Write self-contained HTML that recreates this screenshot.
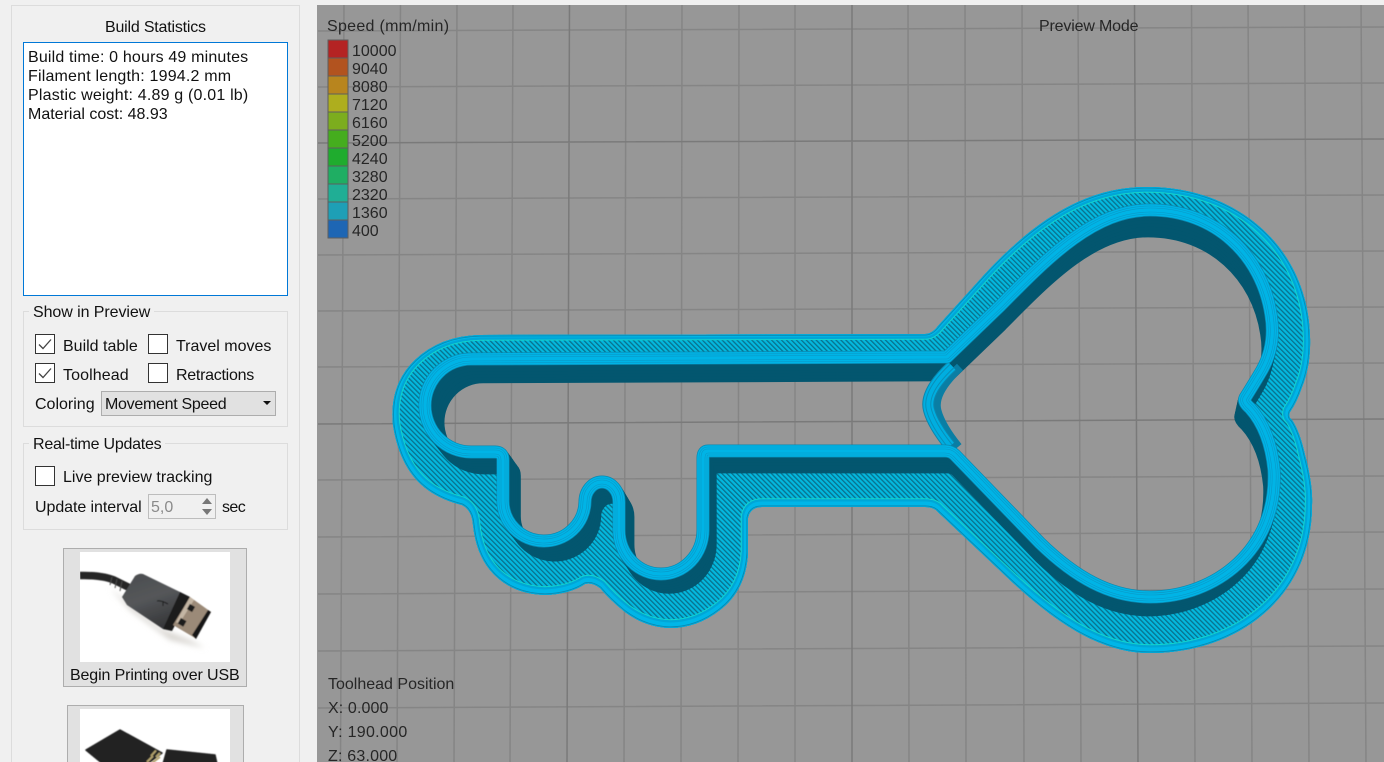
<!DOCTYPE html>
<html><head><meta charset="utf-8"><style>
html,body{margin:0;padding:0;background:#f0f0f0;}
#p{position:relative;width:1384px;height:762px;overflow:hidden;background:#f0f0f0;font:16px/20px "Liberation Sans",sans-serif;color:#111;}
.t{position:absolute;white-space:nowrap;}
.b{position:absolute;box-sizing:border-box;}
.g{position:absolute;box-sizing:border-box;border:1px solid #dcdcdc;}
.c{position:absolute;box-sizing:border-box;width:20px;height:20px;background:#fff;border:1px solid #333;}
.v{color:#262626;}
</style></head><body><div id="p">
<div class="b" style="left:11px;top:5px;width:289px;height:770px;border:1px solid #dcdcdc"></div>
<div class="t" style="left:105px;top:18px;letter-spacing:-.2px">Build Statistics</div>
<div class="b" style="left:23px;top:42px;width:265px;height:254px;background:#fff;border:1px solid #0078d7"></div>
<div class="t" style="left:28px;top:48px;line-height:19px"><span style="letter-spacing:.17px">Build time: 0 hours 49 minutes</span><br><span style="letter-spacing:.19px">Filament length: 1994.2 mm</span><br><span style="letter-spacing:.19px">Plastic weight: 4.89 g (0.01 lb)</span><br>Material cost: 48.93</div>

<div class="g" style="left:23px;top:311px;width:265px;height:116px"></div>
<div class="t" style="left:29px;top:303px;background:#f0f0f0;padding:0 4px;letter-spacing:-.07px">Show in Preview</div>
<div class="c" style="left:35px;top:334px"></div>
<div class="c" style="left:35px;top:363px"></div>
<div class="c" style="left:148px;top:334px"></div>
<div class="c" style="left:148px;top:363px"></div>
<svg class="b" style="left:35px;top:334px" width="20" height="50"><path d="M4 10.5L8 14.5L16 5.5M4 39.5L8 43.5L16 34.5" fill="none" stroke="#444" stroke-width="1.3"/></svg>
<div class="t" style="left:63px;top:337px">Build table</div>
<div class="t" style="left:176px;top:337px">Travel moves</div>
<div class="t" style="left:63px;top:366px;letter-spacing:.1px">Toolhead</div>
<div class="t" style="left:176px;top:366px;letter-spacing:-.27px">Retractions</div>
<div class="t" style="left:35px;top:395px">Coloring</div>
<div class="b" style="left:101px;top:391px;width:175px;height:25px;background:#e1e1e1;border:1px solid #adadad"></div>
<div class="t" style="left:105px;top:395px;letter-spacing:-.29px">Movement Speed</div>
<svg class="b" style="left:262px;top:400px" width="10" height="6"><path d="M1 1H9L5 5Z" fill="#111"/></svg>

<div class="g" style="left:23px;top:443px;width:265px;height:87px"></div>
<div class="t" style="left:29px;top:435px;background:#f0f0f0;padding:0 4px;letter-spacing:-.24px">Real-time Updates</div>
<div class="c" style="left:35px;top:466px"></div>
<div class="t" style="left:63px;top:468px">Live preview tracking</div>
<div class="t" style="left:35px;top:498px;letter-spacing:-.07px">Update interval</div>
<div class="b" style="left:148px;top:494px;width:68px;height:25px;border:1px solid #bdbdbd"></div>
<div class="t" style="left:151px;top:498px;color:#8a8a8a">5,0</div>
<svg class="b" style="left:199px;top:495px" width="16" height="23"><rect x="0" y="0" width="16" height="23" fill="#f0f0f0"/><path d="M3 9L8 3L13 9ZM3 14L8 20L13 14Z" fill="#777"/></svg>
<div class="t" style="left:222px;top:498px;letter-spacing:-.6px">sec</div>

<div class="b" style="left:63px;top:548px;width:184px;height:139px;background:#e1e1e1;border:1px solid #adadad"></div>
<svg class="b" style="left:80px;top:552px" width="150" height="110" viewBox="80 552 150 110">
<defs><filter id="bl"><feGaussianBlur stdDeviation="3"/></filter><filter id="bs"><feGaussianBlur stdDeviation=".5"/></filter>
<linearGradient id="ub" x1="0" y1="0" x2=".4" y2="1"><stop offset="0" stop-color="#4a4c4e"/><stop offset=".5" stop-color="#55575a"/><stop offset="1" stop-color="#37383a"/></linearGradient></defs>
<rect x="80" y="552" width="150" height="110" fill="#fff"/>
<path d="M110 588L130 610L170 640L205 648L190 640L160 628L125 600Z" fill="#d8d5d0" filter="url(#bl)"/>
<g filter="url(#bs)">
<path d="M80 575.5Q102 575 114 580L130 588" fill="none" stroke="#262626" stroke-width="7.5"/>
<path d="M112 577L110 585M117 579L115 588M122 581L120 591" stroke="#4a4a4a" stroke-width="1" fill="none"/>
<path d="M122 597L135 576Q139 573 143 574L180 592L190 597L170 630L163 629L127 605Z" fill="url(#ub)"/>
<path d="M180 592L190 597L172 631L163 629Z" fill="#1f1f1f"/>
<path d="M190 597L211 612L195 638L173 625Z" fill="#9b8a78"/>
<path d="M208 610L211 612L196 639L192 635Z" fill="#141414"/>
<path d="M190 597L176 622L179 624L194 600Z" fill="#c4b6a4"/>
<rect x="188" y="605" width="6" height="6" fill="#1d1d1d" transform="rotate(30 191 608)"/>
<rect x="179" y="619" width="6.5" height="6.5" fill="#1d1d1d" transform="rotate(30 182 622)"/>
<path d="M157 601Q161 600 168 604M163 601V606" stroke="#1d1d1d" stroke-width="1.1" fill="none"/>
</g>
</svg>
<div class="t" style="left:70px;top:666px;letter-spacing:-.13px">Begin Printing over USB</div>

<div class="b" style="left:67px;top:705px;width:177px;height:80px;background:#e1e1e1;border:1px solid #adadad"></div>
<svg class="b" style="left:80px;top:709px" width="150" height="53" viewBox="80 709 150 53">
<rect x="80" y="709" width="150" height="60" fill="#fff"/>
<g filter="url(#bs)">
<path d="M86 750L120 730L162 753L147 764L103 764Z" fill="#242424" stroke="#242424" stroke-width="1.5" stroke-linejoin="round"/>
<path d="M160 753L156 757M156 750.5L151 756M160 757L152 763M153 756L147 762" stroke="#b3a26d" stroke-width="2" fill="none"/>
<path d="M167 750L215 755L217 764L163 764Z" fill="#242424" stroke="#242424" stroke-width="1.5" stroke-linejoin="round"/>
</g>
</svg>

<svg class="b" style="left:317px;top:5px" width="1067" height="757" viewBox="317 5 1067 757">
<defs>
<pattern id="h" width="3.5" height="3.5" patternUnits="userSpaceOnUse" patternTransform="rotate(-45)"><rect width="3.5" height="3.5" fill="#04b8de"/><rect width="1.3" height="3.5" fill="#08718d"/></pattern>
<path id="o" d="M480 335L925 334Q932 334 938 326L985 274C1040 215 1090 187 1147 187C1240 187 1308 250 1310 337Q1311 365 1302 387Q1297 402 1290 412Q1288 417 1292 420Q1300 432 1305 455Q1313 485 1312 505C1312 595 1240 653 1150 653C1100 653 1055 622 1010 580L938 512Q934 507 925 507L762 507Q750 507 748 518L748 553Q746 590 720 610Q697 628 670 628Q645 627 625 612Q610 600 600 588Q592 582 585 584Q570 594 545 595Q510 594 490 570Q476 553 473 525Q472 510 462 505Q442 500 428 490Q400 470 393 425Q389 385 415 360Q440 336 480 335Z"/>
<path id="r" d="M471 359L947 357L1000 306C1050 255 1095 210 1150 210C1215 210 1262 255 1271 315Q1276 345 1262 370Q1255 382 1245 398Q1243 402 1250 408Q1270 430 1274 470C1278 550 1215 597 1150 597C1110 597 1075 577 1040 543L955 455Q951 451 945 451L708 451Q703 451 703 458L703 530A42 44 0 0 1 619 530L619 502A17 20 0 0 0 585 502A41 40 0 0 1 503 500L503 460Q503 452 495 452L471 452A46 46.5 0 0 1 471 359Z"/>
<path id="q" d="M952 366Q924 392 929 410Q933 425 950 446"/>
<clipPath id="co"><use href="#o"/></clipPath>
<clipPath id="ch"><use href="#r" transform="translate(21.86 25.31) scale(.9793)"/></clipPath>
<g id="grid" stroke="#858585" stroke-width="1.5" fill="none">
<path d="M344 0L340.5 762M400.5 0L397 762M457 0L454 762M513 0L510 762M626 0L624 762M682 0L681 762M739 0L738 762M795 0L795 762M908 0L909 762M965 0L966 762M1022 0L1024 762M1078 0L1081 762M1191.5 0L1195 762M1248 0L1252 762M1304.5 0L1309 762M1361 0L1366 762"/>
<path d="M318 31L1384 27M318 87L1384 83M318 199L1384 195M318 255L1384 251M318 311L1384 307M318 367L1384 363M318 480L1384 476M318 537L1384 532M318 594L1384 589M318 651L1384 646M318 708L1384 703"/>
<path stroke="#7a7a7a" d="M569.5 0L567 762M852 0L852 762M1134.5 0L1138 762M318 143L1384 139M318 424L1384 419"/>
</g>
</defs>
<rect x="317" y="5" width="1067" height="757" fill="#979797"/>
<use href="#grid"/>
<!-- flange -->
<use href="#o" fill="url(#h)"/>
<g clip-path="url(#co)" fill="none" stroke-linejoin="round">
<g transform="translate(0 -1.5)">
<use href="#o" stroke="#14d4cc" stroke-width="14.5"/>
<use href="#o" stroke="#00a6d6" stroke-width="12.5"/>
<use href="#o" stroke="#00b6e8" stroke-width="8"/>
</g>
<use href="#o" stroke="#0a86ae" stroke-width="3"/>
<use href="#o" stroke="#00aee0" stroke-width="1.5"/>
</g>
<!-- hole -->
<g clip-path="url(#ch)"><rect x="317" y="5" width="1067" height="757" fill="#979797"/><use href="#grid"/></g>
<!-- swept wall -->
<g fill="none" stroke="#03566f" stroke-width="13" stroke-linejoin="round">
<use href="#r" transform="translate(21.86 25.31) scale(.9793)"/>
<use href="#r" transform="translate(18.22 21.09) scale(.98275)"/>
<use href="#r" transform="translate(14.57 16.87) scale(.9862)"/>
<use href="#r" transform="translate(10.93 12.66) scale(.98965)"/>
<use href="#r" transform="translate(7.29 8.44) scale(.9931)"/>
<use href="#r" transform="translate(3.64 4.22) scale(.99655)"/>
</g>
<!-- heart inner curve -->
<g fill="none">
<use href="#q" transform="translate(8 1)" stroke="#0a7ea4" stroke-width="9"/>
<use href="#q" stroke="#0a86ad" stroke-width="12"/>
<use href="#q" stroke="#00aee0" stroke-width="10"/>
<use href="#q" stroke="#0a8fb8" stroke-width="6"/>
<use href="#q" stroke="#00aee0" stroke-width="4"/>
</g>
<!-- ribbon -->
<g fill="none" stroke-linejoin="round">
<use href="#r" stroke="#0a88b0" stroke-width="13"/>
<use href="#r" stroke="#00b4e6" stroke-width="11.6"/>
<use href="#r" stroke="#0a98c6" stroke-width="8.6"/>
<use href="#r" stroke="#00b4e6" stroke-width="7.4"/>
<use href="#r" stroke="#0a98c6" stroke-width="4.6"/>
<use href="#r" stroke="#00b4e6" stroke-width="3.4"/>
</g>
<!-- legend -->
<g stroke="#5e5e5e" stroke-width="1">
<rect x="328" y="40" width="20" height="18" fill="#b42323"/>
<rect x="328" y="58" width="20" height="18" fill="#b2531f"/>
<rect x="328" y="76" width="20" height="18" fill="#b8851e"/>
<rect x="328" y="94" width="20" height="18" fill="#aeae1e"/>
<rect x="328" y="112" width="20" height="18" fill="#7cad1e"/>
<rect x="328" y="130" width="20" height="18" fill="#45ad1e"/>
<rect x="328" y="148" width="20" height="18" fill="#1fac2e"/>
<rect x="328" y="166" width="20" height="18" fill="#1fae63"/>
<rect x="328" y="184" width="20" height="18" fill="#20ae95"/>
<rect x="328" y="202" width="20" height="18" fill="#1e9fb6"/>
<rect x="328" y="220" width="20" height="18" fill="#1e66b4"/>
</g>
</svg>
<div class="t v" style="left:327px;top:17px;letter-spacing:.29px">Speed (mm/min)</div>
<div class="t v" style="left:352px;top:43px;line-height:18px">10000<br>9040<br>8080<br>7120<br>6160<br>5200<br>4240<br>3280<br>2320<br>1360<br>400</div>
<div class="t v" style="left:1039px;top:17px;letter-spacing:-.17px">Preview Mode</div>
<div class="t v" style="left:328px;top:675px">Toolhead Position</div>
<div class="t v" style="left:328px;top:699px;letter-spacing:.12px">X: 0.000</div>
<div class="t v" style="left:328px;top:723px;letter-spacing:.3px">Y: 190.000</div>
<div class="t v" style="left:328px;top:747px;letter-spacing:.2px">Z: 63.000</div>
</div></body></html>
